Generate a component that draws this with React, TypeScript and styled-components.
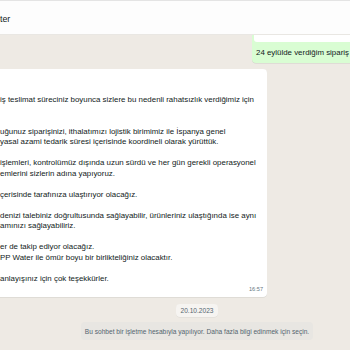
import React from "react";
import styled, { createGlobalStyle } from "styled-components";

const GlobalStyle = createGlobalStyle`
  html, body {
    margin: 0;
    padding: 0;
    width: 350px;
    height: 350px;
    overflow: hidden;
    background: #eeeae4;
  }
  body {
    font-family: "Liberation Sans", Arial, sans-serif;
  }
  * {
    box-sizing: border-box;
  }
`;

const Screen = styled.div`
  width: 350px;
  height: 350px;
  display: flex;
  flex-direction: column;
  overflow: hidden;
`;

const Header = styled.header`
  height: 35px;
  flex: none;
  background: #fdfdfd;
  border-top: 1px solid #e4e4e4;
  border-bottom: 1px solid #e9e7e3;
  display: flex;
  align-items: center;
  padding-top: 3px;
`;

const ContactName = styled.span`
  font-size: 8.8px;
  line-height: 1;
  color: #111b21;
`;

const ChatArea = styled.main`
  flex: 1;
  min-height: 0;
  overflow: hidden;
  background: #eeeae4;
  display: flex;
  flex-direction: column;
  justify-content: flex-end;
`;

const Pane = styled.div`
  width: 514px;
  margin-left: -60px;
  display: flex;
  flex-direction: column;
  padding-bottom: 10px;
`;

const OutRow = styled.div`
  display: flex;
  padding-left: 312px;
  margin-bottom: 6px;
`;

const OutBubble = styled.div`
  width: 140px;
  background: #d9fdd3;
  border-radius: 4px;
  padding: 2px;
  box-shadow: 0 0.5px 0.5px rgba(11, 20, 26, 0.13);
`;

const Attachment = styled.div`
  height: 70px;
  background: #ffffff;
  border-radius: 3px;
`;

const Caption = styled.div`
  padding: 6px 2px 3px 2px;
  font-size: 7.9px;
  line-height: 10.5px;
  white-space: nowrap;
  color: #111b21;
`;

const InRow = styled.div`
  display: flex;
  padding-left: 30px;
  margin-bottom: 7px;
`;

const InBubble = styled.div`
  width: 297px;
  background: #ffffff;
  border-radius: 4px;
  padding: 5px 4px 2.5px 30px;
  box-shadow: 0 0.5px 0.5px rgba(11, 20, 26, 0.13);
`;

const TextLine = styled.div`
  height: 10.5px;
  font-size: 7.9px;
  line-height: 10.5px;
  white-space: nowrap;
  color: #111b21;
`;

const Meta = styled.div`
  height: 10.5px;
  line-height: 10.5px;
  text-align: right;
  font-size: 5.6px;
  color: #667781;
`;

const CenterRow = styled.div<{ $gap: number }>`
  display: flex;
  justify-content: center;
  margin-bottom: ${(p) => p.$gap}px;
`;

const DateChip = styled.div`
  height: 13px;
  padding: 0 4px;
  border-radius: 4px;
  background: #f6f4f1;
  font-size: 6.6px;
  line-height: 13px;
  color: #54656f;
  box-shadow: 0 0.5px 0.5px rgba(11, 20, 26, 0.08);
`;

const SystemChip = styled.div`
  padding: 4.5px 4px;
  border-radius: 4px;
  background: #e8e6e2;
  font-size: 6.6px;
  line-height: 9px;
  color: #54656f;
  white-space: nowrap;
`;

const lines: string[] = [
  "",
  "",
  "iş teslimat süreciniz boyunca sizlere bu nedenli rahatsızlık verdiğimiz için",
  "",
  "",
  "uğunuz siparişinizi, ithalatımızı lojistik birimimiz ile İspanya genel",
  "yasal azami tedarik süresi içerisinde koordineli olarak yürüttük.",
  "",
  "işlemleri, kontrolümüz dışında uzun sürdü ve her gün gerekli operasyonel",
  "emlerini sizlerin adına yapıyoruz.",
  "",
  "çerisinde tarafınıza ulaştırıyor olacağız.",
  "",
  "denizi talebiniz doğrultusunda sağlayabilir, ürünleriniz ulaştığında ise aynı",
  "amınızı sağlayabiliriz.",
  "",
  "er de takip ediyor olacağız.",
  "PP Water ile ömür boyu bir birlikteliğiniz olacaktır.",
  "",
  "anlayışınız için çok teşekkürler.",
];

export default function App() {
  return (
    <Screen>
      <GlobalStyle />
      <Header>
        <ContactName>ter</ContactName>
      </Header>
      <ChatArea>
        <Pane>
          <OutRow>
            <OutBubble>
              <Attachment />
              <Caption>24 eylülde verdiğim sipariş</Caption>
            </OutBubble>
          </OutRow>
          <InRow>
            <InBubble>
              {lines.map((l, i) => (
                <TextLine key={i}>{l}</TextLine>
              ))}
              <Meta>16:57</Meta>
            </InBubble>
          </InRow>
          <CenterRow $gap={5}>
            <DateChip>20.10.2023</DateChip>
          </CenterRow>
          <CenterRow $gap={0}>
            <SystemChip>
              Bu sohbet bir işletme hesabıyla yapılıyor. Daha fazla bilgi edinmek için seçin.
            </SystemChip>
          </CenterRow>
        </Pane>
      </ChatArea>
    </Screen>
  );
}
